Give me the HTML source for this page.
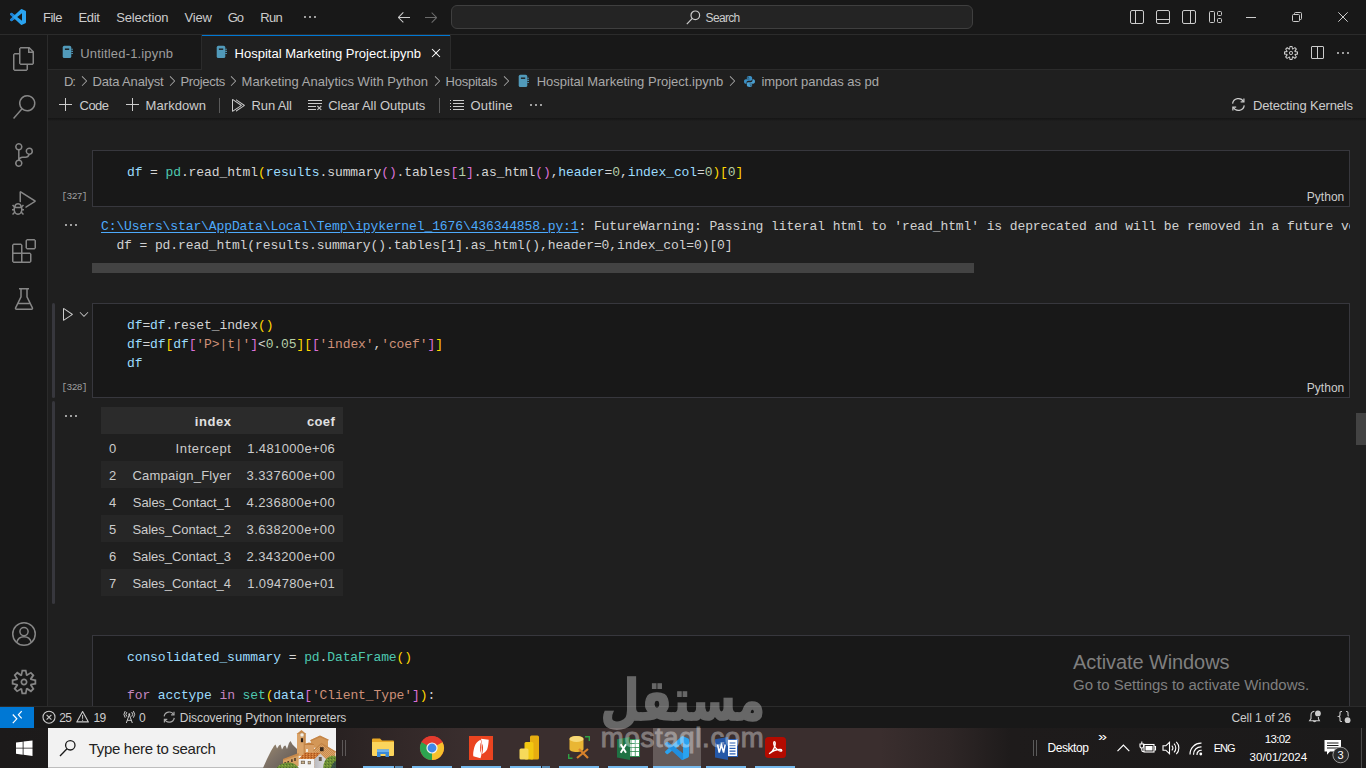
<!DOCTYPE html>
<html lang="en">
<head>
<meta charset="utf-8">
<title>Hospital Marketing Project.ipynb - Visual Studio Code</title>
<style>
html,body{margin:0;padding:0;}
body{width:1366px;height:768px;overflow:hidden;position:relative;background:#1f1f1f;font-family:"Liberation Sans",sans-serif;font-size:13px;color:#ccc;}
.abs,.t,svg.i{position:absolute;}
.t{white-space:pre;display:block;}
svg.i{overflow:visible;}
#title{left:0;top:0;width:1366px;height:34px;background:#181818;border-bottom:1px solid #2b2b2b;}
#act{left:0;top:35px;width:47px;height:671px;background:#181818;border-right:1px solid #2b2b2b;}
#tabs{left:48px;top:35px;width:1318px;height:34px;background:#181818;border-bottom:1px solid #2b2b2b;}
#tab1{left:48px;top:35px;width:153px;height:34px;border-right:1px solid #2b2b2b;}
#tab2{left:202px;top:35px;width:248px;height:35px;background:#1f1f1f;border-right:1px solid #2b2b2b;box-shadow:inset 0 1px 0 #0078d4;}
#tbshadow{left:48px;top:118px;width:1318px;height:3px;background:linear-gradient(#151515,#191919 50%,#1e1e1e);}
.cell{background:#181818;border:1px solid #37373d;box-sizing:border-box;left:92px;width:1258px;}
.code{font-family:"Liberation Mono",monospace;font-size:13px;line-height:19px;letter-spacing:-0.1px;white-space:pre;color:#d4d4d4;}
.v{color:#9cdcfe}.m{color:#4ec9b0}.y{color:#ffd700}.p{color:#da70d6}.n{color:#b5cea8}.s{color:#ce9178}.k{color:#c586c0}.b{color:#179fff}
#status{left:0;top:706px;width:1366px;height:21px;background:#181818;border-top:1px solid #2b2b2b;}
#taskbar{left:0;top:728px;width:1366px;height:40px;background:linear-gradient(90deg,#1c1a1a 0,#1f1c1c 300px,#292222 340px,#322828 400px,#3a2e2e 470px,#3a2e2e 880px,#2e2626 950px,#1e1b1b 1010px,#1b1a1a 1366px);}
</style>
</head>
<body>
<div id="title" class="abs"></div>
<svg class="i" style="left:10px;top:9px" width="16" height="16" viewBox="0 0 24 24"><path fill="#2aa3f0" d="M23.15 2.587L18.21.21a1.494 1.494 0 0 0-1.705.29l-9.46 8.63-4.12-3.128a.999.999 0 0 0-1.276.057L.327 7.261A1 1 0 0 0 .326 8.74L3.899 12 .326 15.26a1 1 0 0 0 .001 1.479L1.65 17.94a.999.999 0 0 0 1.276.057l4.12-3.128 9.46 8.63a1.492 1.492 0 0 0 1.704.29l4.942-2.377A1.5 1.5 0 0 0 24 20.06V3.939a1.5 1.5 0 0 0-.85-1.352zm-5.146 14.861L10.826 12l7.178-5.448v10.896z"/><path fill="#1b7fd3" d="M.327 7.261L1.650 6.060a.999.999 0 0 1 1.276-.057l4.120 3.128L3.899 12 .326 8.740a1 1 0 0 1 .001-1.479zM3.899 12l3.147 2.869-4.120 3.128a.999.999 0 0 1-1.276-.057L.327 16.739a1 1 0 0 1-.001-1.479z"/></svg>
<svg class="i" style="left:302px;top:9px" width="16" height="16" viewBox="0 0 16 16"><path fill="#ccc" d="M4 8a1 1 0 1 1-2 0 1 1 0 0 1 2 0zm5 0a1 1 0 1 1-2 0 1 1 0 0 1 2 0zm5 0a1 1 0 1 1-2 0 1 1 0 0 1 2 0z"/></svg>
<svg class="i" style="left:396px;top:9px" width="16" height="16" viewBox="0 0 16 16"><path fill="#ccc" d="M7 3.093l-5 5V8.8l5 5 .707-.707-4.146-4.147H14v-1H3.56L7.708 3.8 7 3.093z"/></svg>
<svg class="i" style="left:423px;top:9px" width="16" height="16" viewBox="0 0 16 16"><path fill="#6b6b6b" d="M9 13.887l5-5V8.18l-5-5-.707.707 4.146 4.147H2v1h10.44L8.292 13.18l.707.707z"/></svg>
<div class="abs" style="left:451px;top:5px;width:520px;height:22px;background:#242424;border:1px solid #3f3f3f;border-radius:6px;"></div>
<svg class="i" style="left:686px;top:10px" width="15" height="15" viewBox="0 0 15 15" fill="none" stroke="#ccc" stroke-width="1.2"><circle cx="9.3" cy="5.3" r="4.3"/><path d="M6.3 8.4L0.8 14.2"/></svg>

<svg class="i" style="left:1129px;top:9px" width="16" height="16" viewBox="0 0 16 16" fill="none" stroke="#ccc" stroke-width="1"><rect x="1.5" y="1.5" width="13" height="13" rx="1.5"/><path d="M6.5 1.5v13"/></svg>
<svg class="i" style="left:1155px;top:9px" width="16" height="16" viewBox="0 0 16 16" fill="none" stroke="#ccc" stroke-width="1"><rect x="1.5" y="1.5" width="13" height="13" rx="1.5"/><path d="M1.5 10.5h13"/></svg>
<svg class="i" style="left:1181px;top:9px" width="16" height="16" viewBox="0 0 16 16" fill="none" stroke="#ccc" stroke-width="1"><rect x="1.5" y="1.5" width="13" height="13" rx="1.5"/><path d="M9.500 1.500v13"/></svg>
<svg class="i" style="left:1207px;top:9px" width="16" height="16" viewBox="0 0 16 16" fill="none" stroke="#ccc" stroke-width="1"><rect x="2.500" y="2.500" width="5" height="11" rx="1"/><rect x="10.500" y="2.500" width="4" height="4" rx="1"/><rect x="10.500" y="9.500" width="4" height="4" rx="1"/></svg>
<svg class="i" style="left:1246px;top:12px" width="10" height="10" viewBox="0 0 10 10" fill="none" stroke="#ccc" stroke-width="1"><path d="M0 5.500h10"/></svg>
<svg class="i" style="left:1292px;top:12px" width="10" height="10" viewBox="0 0 10 10" fill="none" stroke="#ccc" stroke-width="1"><rect x="0.500" y="2.500" width="7" height="7" rx="1"/><path d="M2.500 2.500v-1a1 1 0 0 1 1-1h5a1 1 0 0 1 1 1v5a1 1 0 0 1-1 1h-1"/></svg>
<svg class="i" style="left:1338px;top:12px" width="10" height="10" viewBox="0 0 10 10" fill="none" stroke="#ccc" stroke-width="1"><path d="M0.300 0.300l9.400 9.400M9.700 0.300l-9.400 9.400"/></svg>

<div id="act" class="abs"></div>
<svg class="i" style="left:12px;top:47px" width="24" height="24" viewBox="0 0 24 24"><path fill="#868686" d="M17.5 0h-9L7 1.500V6H2.500L1 7.500v15.070L2.500 24h12.070L16 22.570V18h4.700l1.300-1.430V4.500L17.500 0zm0 2.120l2.380 2.380H17.500V2.120zm-3 20.380h-12v-15H7v9.070L8.500 18h6v4.500zm6-6h-12v-15H16V6h4.500v10.500z"/></svg>
<svg class="i" style="left:12px;top:95px" width="24" height="24" viewBox="0 0 24 24"><path fill="#868686" d="M15.250 0a8.250 8.250 0 0 0-6.180 13.720L1 22.880l1.120 1 8.050-9.120A8.251 8.251 0 1 0 15.250.01V0zm0 15a6.750 6.750 0 1 1 0-13.500 6.750 6.750 0 0 1 0 13.500z"/></svg>
<svg class="i" style="left:12px;top:143px" width="24" height="24" viewBox="0 0 24 24"><path fill="#868686" d="M21.007 8.222A3.738 3.738 0 0 0 15.045 5.200a3.737 3.737 0 0 0 1.156 6.583 2.988 2.988 0 0 1-2.668 1.670h-2.990a4.456 4.456 0 0 0-2.989 1.165V7.400a3.737 3.737 0 1 0-1.494 0v9.117a3.776 3.776 0 1 0 1.816.099 2.990 2.990 0 0 1 2.668-1.667h2.990a4.484 4.484 0 0 0 4.223-3.039 3.736 3.736 0 0 0 3.250-3.687zM4.565 3.738a2.242 2.242 0 1 1 4.484 0 2.242 2.242 0 0 1-4.484 0zm4.484 16.441a2.242 2.242 0 1 1-4.484 0 2.242 2.242 0 0 1 4.484 0zm8.221-9.715a2.242 2.242 0 1 1 0-4.485 2.242 2.242 0 0 1 0 4.485z"/></svg>
<svg class="i" style="left:12px;top:191px" width="24" height="24" viewBox="0 0 24 24"><path fill="#868686" d="M10.940 13.500l-1.320 1.320a3.730 3.730 0 0 0-7.240 0L1.060 13.500 0 14.560l1.720 1.720-.22.220V18H0v1.500h1.500v.080c.077.489.214.966.410 1.420L0 22.940 1.060 24l1.650-1.650A4.308 4.308 0 0 0 6 24a4.310 4.310 0 0 0 3.290-1.650L10.940 24 12 22.940 10.090 21c.198-.464.336-.951.410-1.450v-.1H12V18h-1.500v-1.500l-.22-.220L12 14.560l-1.060-1.060zM6 13.500a2.250 2.250 0 0 1 2.250 2.250h-4.500A2.250 2.250 0 0 1 6 13.500zm3 6a3.330 3.330 0 0 1-3 3 3.330 3.330 0 0 1-3-3v-2.250h6v2.250zm14.760-9.900v1.260L13.500 17.370V15.600l8.500-5.370L9 2v9.460a5.070 5.070 0 0 0-1.500-.720V.630L8.640 0l15.120 9.600z"/></svg>
<svg class="i" style="left:12px;top:239px" width="24" height="24" viewBox="0 0 24 24"><path fill="#868686" d="M13.500 1.500L15 0h7.500L24 1.500V9l-1.500 1.500H15L13.500 9V1.500zm1.500 0V9h7.500V1.500H15zM0 15V6l1.500-1.500H9L10.500 6v7.500H18l1.500 1.500v7.500L18 24H1.500L0 22.500V15zm9-1.500V6H1.500v7.500H9zM9 15H1.500v7.500H9V15zm1.500 7.500H18V15h-7.500v7.500z"/></svg>
<svg class="i" style="left:12px;top:287px" width="24" height="24" viewBox="0 0 24 24" fill="none" stroke="#868686" stroke-width="1.500" stroke-linejoin="round"><path d="M7 1.750h10M9 1.750v8.200L3.600 20.800a1 1 0 0 0 .9 1.450h15a1 1 0 0 0 .9-1.450L15 9.950v-8.200M5.800 16.500h12.400"/></svg>
<svg class="i" style="left:12px;top:622px" width="24" height="24" viewBox="0 0 24 24" fill="none" stroke="#868686" stroke-width="1.500"><circle cx="12" cy="12" r="11.250"/><circle cx="12" cy="9.600" r="4.100"/><path d="M4.700 20.400c.9-3.500 3.800-5.700 7.300-5.700s6.400 2.200 7.300 5.700"/></svg>
<svg class="i" style="left:10px;top:668px" width="28" height="28" viewBox="0 0 16 16"><path fill="#868686" d="M9.100 4.400L8.600 2H7.400l-.5 2.400-.7.300-2-1.300-.9.800 1.300 2-.2.700-2.400.5v1.200l2.400.5.300.8-1.300 2 .8.800 2-1.300.8.300.4 2.300h1.200l.5-2.400.8-.3 2 1.300.8-.8-1.300-2 .3-.8 2.300-.4V7.400l-2.400-.5-.3-.8 1.300-2-.8-.8-2 1.300-.7-.2zM9.400 1l.5 2.400L12 2.100l2 2-1.400 2.100 2.400.4v2.800l-2.400.5L14 12l-2 2-2.100-1.400-.5 2.400H6.600l-.5-2.400L4 13.900l-2-2 1.400-2.100L1 9.400V6.600l2.400-.5L2.100 4l2-2 2.100 1.400.4-2.400h2.800zm.6 7c0 1.100-.9 2-2 2s-2-.9-2-2 .9-2 2-2 2 .9 2 2zM8 9c.6 0 1-.4 1-1s-.4-1-1-1-1 .4-1 1 .4 1 1 1z"/></svg>

<div id="tabs" class="abs"></div>
<div id="tab1" class="abs"></div>
<div id="tab2" class="abs"></div>
<svg class="i" style="left:61px;top:45px" width="13" height="14" viewBox="0 0 13 14"><rect x="1.700" y="0.800" width="8.600" height="12.300" rx="1.600" fill="#519aba"/><rect x="3.900" y="3.500" width="4.300" height="1.400" fill="#181818"/><path d="M10.300 4.300h1.600M10.300 6.400h1.600M10.300 8.500h1.600" stroke="#519aba" stroke-width="1.100"/></svg>
<svg class="i" style="left:215px;top:45px" width="13" height="14" viewBox="0 0 13 14"><rect x="1.700" y="0.800" width="8.600" height="12.300" rx="1.600" fill="#519aba"/><rect x="3.900" y="3.500" width="4.300" height="1.400" fill="#1f1f1f"/><path d="M10.300 4.300h1.600M10.300 6.400h1.600M10.300 8.500h1.600" stroke="#519aba" stroke-width="1.100"/></svg>
<svg class="i" style="left:428px;top:45px" width="16" height="16" viewBox="0 0 16 16"><path fill="#fff" d="M8 8.707l3.646 3.647.708-.707L8.707 8l3.647-3.646-.707-.708L8 7.293 4.354 3.646l-.707.708L7.293 8l-3.646 3.646.707.708L8 8.707z"/></svg>
<!-- editor actions -->
<svg class="i" style="left:1283px;top:45px" width="16" height="16" viewBox="0 0 16 16"><path fill="#ccc" d="M9.100 4.400L8.600 2H7.400l-.5 2.400-.7.300-2-1.300-.9.800 1.300 2-.2.700-2.400.5v1.200l2.400.5.300.8-1.300 2 .8.800 2-1.300.8.300.4 2.300h1.200l.5-2.400.8-.3 2 1.300.8-.8-1.300-2 .3-.8 2.300-.4V7.400l-2.400-.5-.3-.8 1.300-2-.8-.8-2 1.300-.7-.2zM9.400 1l.5 2.400L12 2.100l2 2-1.400 2.100 2.400.4v2.800l-2.400.5L14 12l-2 2-2.100-1.400-.5 2.400H6.600l-.5-2.400L4 13.900l-2-2 1.400-2.100L1 9.400V6.600l2.400-.5L2.100 4l2-2 2.100 1.400.4-2.400h2.800zm.6 7c0 1.100-.9 2-2 2s-2-.9-2-2 .9-2 2-2 2 .9 2 2zM8 9c.6 0 1-.4 1-1s-.4-1-1-1-1 .4-1 1 .4 1 1 1z"/></svg>
<svg class="i" style="left:1309px;top:45px" width="16" height="16" viewBox="0 0 16 16"><path fill="#ccc" d="M14 1H3L2 2v11l1 1h11l1-1V2l-1-1zM8 13H3V2h5v11zm6 0H9V2h5v11z"/></svg>
<svg class="i" style="left:1335px;top:45px" width="16" height="16" viewBox="0 0 16 16"><path fill="#ccc" d="M4 8a1 1 0 1 1-2 0 1 1 0 0 1 2 0zm5 0a1 1 0 1 1-2 0 1 1 0 0 1 2 0zm5 0a1 1 0 1 1-2 0 1 1 0 0 1 2 0z"/></svg>
<!-- breadcrumb chevrons -->
<svg class="i" style="left:76px;top:73px" width="16" height="16" viewBox="0 0 16 16"><path fill="#a9a9a9" d="M10.072 8.024L5.715 3.667l.618-.62L11 7.716v.618L6.333 13l-.618-.619 4.357-4.357z"/></svg>
<svg class="i" style="left:164px;top:73px" width="16" height="16" viewBox="0 0 16 16"><path fill="#a9a9a9" d="M10.072 8.024L5.715 3.667l.618-.62L11 7.716v.618L6.333 13l-.618-.619 4.357-4.357z"/></svg>
<svg class="i" style="left:225px;top:73px" width="16" height="16" viewBox="0 0 16 16"><path fill="#a9a9a9" d="M10.072 8.024L5.715 3.667l.618-.62L11 7.716v.618L6.333 13l-.618-.619 4.357-4.357z"/></svg>
<svg class="i" style="left:429px;top:73px" width="16" height="16" viewBox="0 0 16 16"><path fill="#a9a9a9" d="M10.072 8.024L5.715 3.667l.618-.62L11 7.716v.618L6.333 13l-.618-.619 4.357-4.357z"/></svg>
<svg class="i" style="left:498px;top:73px" width="16" height="16" viewBox="0 0 16 16"><path fill="#a9a9a9" d="M10.072 8.024L5.715 3.667l.618-.62L11 7.716v.618L6.333 13l-.618-.619 4.357-4.357z"/></svg>
<svg class="i" style="left:724px;top:73px" width="16" height="16" viewBox="0 0 16 16"><path fill="#a9a9a9" d="M10.072 8.024L5.715 3.667l.618-.62L11 7.716v.618L6.333 13l-.618-.619 4.357-4.357z"/></svg>
<svg class="i" style="left:517px;top:74px" width="13" height="14" viewBox="0 0 13 14"><rect x="1.700" y="0.800" width="8.600" height="12.300" rx="1.600" fill="#519aba"/><rect x="3.900" y="3.500" width="4.300" height="1.400" fill="#1f1f1f"/><path d="M10.300 4.300h1.600M10.300 6.400h1.600M10.300 8.500h1.600" stroke="#519aba" stroke-width="1.100"/></svg>
<svg class="i" style="left:744px;top:75.500px" width="11" height="11" viewBox="0 0 12 12"><path fill="#3a8fc4" d="M5.900 0C3.800 0 3.100.8 3.100 1.800v1.300H6v.5H1.900C.8 3.600 0 4.500 0 6s.7 2.500 1.800 2.500h1V7c0-1 .9-1.900 1.900-1.900h2.700c.8 0 1.500-.7 1.500-1.500V1.800C8.900.7 7.700 0 5.900 0zM4.400 1a.5.500 0 1 1 0 1.100.5.500 0 0 1 0-1.100z"/><path fill="#4b9fd0" d="M6.100 12c2.100 0 2.800-.8 2.800-1.800V8.900H6v-.5h4.100c1.100 0 1.900-.9 1.900-2.400s-.7-2.500-1.800-2.500h-1V5c0 1-.9 1.900-1.900 1.900H4.600c-.8 0-1.500.7-1.500 1.500v1.800c0 1.100 1.200 1.800 3 1.800zm1.500-1a.5.500 0 1 1 0-1.100.5.500 0 0 1 0 1.100z"/></svg>
<!-- toolbar icons -->
<svg class="i" style="left:58px;top:97px" width="16" height="16" viewBox="0 0 16 16"><path fill="#ccc" d="M14 7v1H8v6H7V8H1V7h6V1h1v6h6z"/></svg>
<svg class="i" style="left:124.500px;top:97px" width="16" height="16" viewBox="0 0 16 16"><path fill="#ccc" d="M14 7v1H8v6H7V8H1V7h6V1h1v6h6z"/></svg>
<div class="abs" style="left:219px;top:98px;width:1px;height:15px;background:#5a5a5a"></div>
<svg class="i" style="left:230px;top:97px" width="16" height="16" viewBox="0 0 16 16"><path fill="#ccc" d="M2.780 2L2 2.410v12l.78.420 9-6V8l-9-6zM3 13.480V3.350l7.600 5.070L3 13.480z"/><path fill="#ccc" d="M6 14.683l8.780-5.853V8L6 2.147V3.350l7.600 5.070L6 13.480v1.203z"/></svg>
<svg class="i" style="left:307.300px;top:97px" width="16" height="16" viewBox="0 0 16 16"><path fill="#ccc" d="M10 12.600l.7.700 1.600-1.600 1.600 1.600.8-.7L13 11l1.700-1.600-.8-.8-1.600 1.700-1.600-1.700-.7.800 1.600 1.600-1.600 1.600zM1 4h14V3H1v1zm0 3h14V6H1v1zm8 2.500V9H1v1h8v-.5zM9 13v-1H1v1h8z"/></svg>
<div class="abs" style="left:439px;top:98px;width:1px;height:15px;background:#5a5a5a"></div>
<svg class="i" style="left:449px;top:97px" width="16" height="16" viewBox="0 0 16 16"><path fill="#ccc" d="M2 3H1v1h1V3zm0 3H1v1h1V6zM1 9h1v1H1V9zm1 3H1v1h1v-1zm2-9h11v1H4V3zm11 3H4v1h11V6zM4 9h11v1H4V9zm11 3H4v1h11v-1z"/></svg>
<svg class="i" style="left:527.500px;top:97px" width="16" height="16" viewBox="0 0 16 16"><path fill="#ccc" d="M4 8a1 1 0 1 1-2 0 1 1 0 0 1 2 0zm5 0a1 1 0 1 1-2 0 1 1 0 0 1 2 0zm5 0a1 1 0 1 1-2 0 1 1 0 0 1 2 0z"/></svg>
<svg class="i" style="left:1231px;top:97px" width="15" height="15" viewBox="0 0 15 15" fill="none" stroke="#ccc" stroke-width="1.250"><path d="M1.56 6.68A5.9 5.9 0 0 1 12.61 4.73M13.24 8.32A5.9 5.9 0 0 1 2.19 10.27"/><path d="M12.91 1.43v3.50h-3.30M1.89 13.57v-3.50h3.30"/></svg>
<div id="tbshadow" class="abs"></div>

<!-- cell 1 -->
<div class="abs cell" style="top:150px;height:57px"></div>
<div class="abs code" style="left:127px;top:163px"><span class="v">df</span> = <span class="m">pd</span>.read_html<span class="y">(</span><span class="v">results</span>.summary<span class="p">()</span>.tables<span class="p">[</span><span class="n">1</span><span class="p">]</span>.as_html<span class="p">()</span>,<span class="v">header</span>=<span class="n">0</span>,<span class="v">index_col</span>=<span class="n">0</span><span class="y">)[</span><span class="n">0</span><span class="y">]</span></div>
<div class="abs" style="left:101px;top:211px;width:1249px;height:50px;overflow:hidden"><div class="abs code" style="left:0;top:6px;color:#d2d2d2"><span style="color:#4daafc;text-decoration:underline;text-underline-offset:2px">C:\Users\star\AppData\Local\Temp\ipykernel_1676\436344858.py:1</span>: FutureWarning: Passing literal html to 'read_html' is deprecated and will be removed in a future version. To read from a literal string, wrap it in a 'StringIO' object.
  df = pd.read_html(results.summary().tables[1].as_html(),header=0,index_col=0)[0]</div></div>
<div class="abs" style="left:92px;top:263px;width:882px;height:10px;background:#434343"></div>
<svg class="i" style="left:63px;top:217px" width="16" height="16" viewBox="0 0 16 16"><path fill="#ccc" d="M4 8a1 1 0 1 1-2 0 1 1 0 0 1 2 0zm5 0a1 1 0 1 1-2 0 1 1 0 0 1 2 0zm5 0a1 1 0 1 1-2 0 1 1 0 0 1 2 0z"/></svg>
<!-- cell 2 -->
<div class="abs" style="left:52px;top:303px;width:3px;height:95px;background:#37373d;border-radius:1.500px"></div>
<div class="abs" style="left:52px;top:401px;width:3px;height:203px;background:#37373d;border-radius:1.500px"></div>
<div class="abs cell" style="top:303px;height:95px"></div>
<svg class="i" style="left:60px;top:306px" width="16" height="16" viewBox="0 0 16 16"><path fill="#ccc" d="M3.780 2L3 2.410v12l.78.420 9-6V8l-9-6zM4 13.480V3.350l7.600 5.070L4 13.480z"/></svg>
<svg class="i" style="left:77px;top:307px" width="14" height="14" viewBox="0 0 16 16"><path fill="#ccc" d="M7.976 10.072l4.357-4.357.62.618L8.284 11h-.618L3 6.333l.619-.618 4.357 4.357z"/></svg>
<div class="abs code" style="left:127px;top:316px"><span class="v">df</span>=<span class="v">df</span>.reset_index<span class="y">()</span>
<span class="v">df</span>=<span class="v">df</span><span class="y">[</span><span class="v">df</span><span class="p">[</span><span class="s">'P&gt;|t|'</span><span class="p">]</span>&lt;<span class="n">0.05</span><span class="y">][</span><span class="p">[</span><span class="s">'index'</span>,<span class="s">'coef'</span><span class="p">]</span><span class="y">]</span>
<span class="v">df</span></div>
<svg class="i" style="left:63px;top:408px" width="16" height="16" viewBox="0 0 16 16"><path fill="#ccc" d="M4 8a1 1 0 1 1-2 0 1 1 0 0 1 2 0zm5 0a1 1 0 1 1-2 0 1 1 0 0 1 2 0zm5 0a1 1 0 1 1-2 0 1 1 0 0 1 2 0z"/></svg>
<!-- dataframe -->
<div class="abs" style="left:101px;top:407px;width:242px;height:27px;background:#2b2b2b"></div>
<div class="abs" style="left:101px;top:461px;width:242px;height:27px;background:#262626"></div>
<div class="abs" style="left:101px;top:515px;width:242px;height:27px;background:#262626"></div>
<div class="abs" style="left:101px;top:569px;width:242px;height:27px;background:#262626"></div>
<!-- cell 3 -->
<div class="abs cell" style="top:635px;height:80px"></div>
<div class="abs code" style="left:127px;top:647.500px"><span class="v">consolidated_summary</span> = <span class="m">pd</span>.<span class="m">DataFrame</span><span class="y">()</span>

<span class="k">for</span> <span class="v">acctype</span> <span class="k">in</span> <span class="m">set</span><span class="y">(</span><span class="v">data</span><span class="p">[</span><span class="s">'Client_Type'</span><span class="p">]</span><span class="y">)</span>:</div>
<!-- vertical scrollbar -->
<div class="abs" style="left:1356px;top:413px;width:10px;height:32px;background:#434343"></div>

<div id="status" class="abs"></div>
<div class="abs" style="left:0;top:707px;width:34px;height:21px;background:#0078d4"></div>
<svg class="i" style="left:9px;top:709px" width="16" height="16" viewBox="0 0 16 16" fill="none" stroke="#fff" stroke-width="1.200"><path d="M3.800 5.500l4 4.300-4 4.300M12.700 2.200l-3.300 3.600 3.300 3.600"/></svg>
<svg class="i" style="left:42px;top:710px" width="14" height="14" viewBox="0 0 14 14" fill="none" stroke="#ccc" stroke-width="1.100"><circle cx="7" cy="7.200" r="6"/><path d="M4.600 4.800l4.800 4.800M9.400 4.800l-4.800 4.800"/></svg>
<svg class="i" style="left:76px;top:710px" width="14" height="14" viewBox="0 0 14 14" fill="none" stroke="#ccc" stroke-width="1.100" stroke-linejoin="round"><path d="M6.600 1.600L0.800 11.900h11.600z"/><path d="M6.600 5v3.800M6.600 9.700v1.100" stroke-width="1"/></svg>
<svg class="i" style="left:122px;top:710px" width="15" height="14" viewBox="0 0 15 14" fill="none" stroke="#ccc" stroke-width="1"><path d="M7.300 4.600L4.300 13M7.300 4.600l3 8.400M5.300 10.300h4"/><circle cx="7.300" cy="4.300" r="1" fill="#ccc" stroke="none"/><path d="M4.900 2.100a3.300 3.300 0 0 0 0 4.500M9.700 2.100a3.300 3.300 0 0 1 0 4.500M3.200 1.100a5.400 5.400 0 0 0 0 6.600M11.400 1.100a5.400 5.400 0 0 1 0 6.600"/></svg>
<svg class="i" style="left:162px;top:710px" width="14" height="14" viewBox="0 0 14 14" fill="none" stroke="#a6a6a6" stroke-width="1.200"><path d="M2.15 6.39A5.1 5.1 0 0 1 11.70 4.71M12.25 7.81A5.1 5.1 0 0 1 2.70 9.49"/><path d="M12.00 1.81v3.10h-2.90M2.40 12.39v-3.10h2.90"/></svg>
<svg class="i" style="left:1308px;top:710px" width="14" height="14" viewBox="0 0 14 14" fill="none" stroke="#ccc" stroke-width="1.100"><path d="M6.400 1.200A4 4 0 0 0 3 5.200v3.300L1.600 10.700h9.800L10.400 8.700V7"/><path d="M5.200 10.800a1.600 1.600 0 0 0 2.800 0"/><circle cx="9.900" cy="3.400" r="2.900" fill="#ccc" stroke="none"/></svg>
<svg class="i" style="left:1338px;top:710px" width="14" height="14" viewBox="0 0 14 14" fill="none" stroke="#ccc" stroke-width="1.100"><path d="M4 1.500H3.300a1.300 1.300 0 0 0-1.300 1.300v2.200c0 .8-.5 1.300-1.200 1.500.7.200 1.200.7 1.200 1.500v2.200a1.300 1.300 0 0 0 1.300 1.300H4"/><path d="M8 1.500h.7a1.300 1.300 0 0 1 1.300 1.300v2.200c0 .5.200.9.600 1.200"/><circle cx="9.600" cy="10.200" r="2.900" fill="#ccc" stroke="none"/></svg>

<div id="taskbar" class="abs"></div>
<!-- start -->
<svg class="i" style="left:15.800px;top:739.800px" width="16.500" height="16.400" viewBox="0 0 18 17"><path fill="#fff" d="M0 2.400L7.300 1.400v6.700H0zM8.200 1.300L18 0v8.100H8.200zM0 8.900h7.300v6.700L0 14.600zM8.200 8.900H18V17l-9.800-1.300z"/></svg>
<!-- search box -->
<div class="abs" style="left:48px;top:728px;width:288px;height:40px;background:#f2f2f2;overflow:hidden;box-shadow:inset 0 -1px 0 #bdbdbd">
<svg class="abs" style="left:204px;top:0" width="84" height="40" viewBox="252 728 84 40">
<defs><pattern id="hx" width="2" height="2" patternUnits="userSpaceOnUse"><rect width="2" height="2" fill="#dca56a"/><rect width="1" height="1" fill="#c88b4e"/><rect x="1" y="1" width="1" height="1" fill="#c88b4e"/></pattern>
<pattern id="rf" width="3" height="2" patternUnits="userSpaceOnUse"><rect width="3" height="2" fill="#c9712f"/><rect width="1" height="1" fill="#e0934f"/><rect x="2" y="1" width="1" height="1" fill="#a9551f"/></pattern>
<pattern id="gr" width="3" height="3" patternUnits="userSpaceOnUse"><rect width="3" height="3" fill="#6d8f35"/><rect width="1" height="1" fill="#8fae45"/><rect x="1" y="2" width="1" height="1" fill="#4c6b2c"/></pattern>
<linearGradient id="mt" x1="0" y1="0" x2="1" y2="1"><stop offset="0" stop-color="#a08b6b"/><stop offset=".45" stop-color="#7d7166"/><stop offset="1" stop-color="#5b5450"/></linearGradient>
<linearGradient id="gh" x1="0" y1="0" x2="1" y2="0"><stop offset="0" stop-color="#b9b9bd"/><stop offset="1" stop-color="#dcdcde"/></linearGradient></defs>
<path fill="url(#mt)" d="M263 768l4-9 4-8 3-5 1.500-1.500 1.500 4 2-3 1.500-1 1.500 5 2-3.500 1.500-.5 1.500 3.500 2-6 1.500-2 2 3.500 3 3 2 2v21z"/>
<path fill="#dba469" d="M297 733.500h8.600V756H297z"/><path fill="#c98b4c" d="M296.500 734l5-4 4.800 4z"/><rect x="303.600" y="733.500" width="2" height="20.500" fill="#c58a4e"/>
<circle cx="302" cy="734.900" r="2" fill="#f4efe6" stroke="#b9986a" stroke-width=".5"/><rect x="300.900" y="738.200" width="2.200" height="4" fill="#2a2019"/>
<path fill="#d39757" d="M310.800 740l9.200-4.200 8 4v8h-17.200z"/><path fill="#c48547" d="M310 740.300l10-4.800 9 4.300-1 1-8-3.500-9 4z"/>
<path fill="#d9a066" d="M305 743.600h9v10h-9z"/><path fill="#c3803f" d="M304.500 744l4.500-1.500 5 1.500v1h-9.500z"/><rect x="306" y="749" width="2" height="3" fill="#f1ebdd"/>
<path fill="url(#hx)" d="M313.700 750l7.700-6.800 14 8.300V768h-21.700z"/><path fill="#c58748" d="M313 750.300l8.400-7.600 14.600 8.800v1.300l-14.600-8.300-7.600 6.800z"/>
<rect x="320" y="747.200" width="3.600" height="4" fill="#3a2a1d"/>
<path fill="#d7a162" d="M283 759.500l15.700-5.500v12l-15.700 2z"/><path fill="#c98a4b" d="M283 759l15.700-6v2.200L283 760.500z"/>
<path fill="#3d2e22" d="M284.500 762h1.400v2.500h-1.400zM287.500 761h1.400v2.500h-1.400zM291.200 759.300h1.400v2.800h-1.400zM294.300 758h1.400v3h-1.400z"/>
<path fill="url(#rf)" d="M298.300 759.200l6.500-6.400h15.700l-6 6.400z"/>
<path fill="#f3f3f3" d="M298.900 759h15.500v9h-15.500z"/><path fill="url(#gh)" d="M314.400 759l5.900-5.300 5.800 5.600V768h-11.700z"/>
<path fill="#6a5a49" d="M300.900 760.800h4v3.200h-4zM307.800 761h3v3.300h-3zM318.800 757.100h2.900v4h-2.900z"/><path fill="#c9b38f" d="M301.500 761.400h2.800v2h-2.800zM308.300 761.600h2v2h-2z"/>
<path fill="url(#gr)" d="M323.200 768c0-5 2-9 5.500-11s7.300-1 7.300 0v11zM276.400 768c2-3 6-5 11-5.500s9 1.500 11 5.500z"/>
<path fill="#23364a" d="M333 763l3-2v7h-5z" opacity=".7"/>
</svg>
</div>
<svg class="i" style="left:59px;top:739px" width="18" height="18" viewBox="0 0 18 18" fill="none" stroke="#1a1a1a" stroke-width="1.300"><circle cx="11.300" cy="6.300" r="4.700"/><path d="M8 9.700L1 17"/></svg>
<div class="abs" style="left:342px;top:740px;width:1px;height:16px;background:#5c5757"></div>
<div class="abs" style="left:345px;top:740px;width:1px;height:16px;background:#5c5757"></div>
<!-- running indicators -->
<div class="abs" style="left:363px;top:766px;width:40px;height:2px;background:linear-gradient(90deg,#76b9ed 0,#76b9ed 31px,#2c2324 31px,#2c2324 32px,#5a8db6 32px)"></div>
<div class="abs" style="left:412px;top:766px;width:40px;height:2px;background:#76b9ed"></div>
<div class="abs" style="left:461px;top:766px;width:40px;height:2px;background:#76b9ed"></div>
<div class="abs" style="left:510px;top:766px;width:40px;height:2px;background:linear-gradient(90deg,#76b9ed 0,#76b9ed 31px,#2c2324 31px,#2c2324 32px,#5a8db6 32px)"></div>
<div class="abs" style="left:559px;top:766px;width:40px;height:2px;background:#76b9ed"></div>
<div class="abs" style="left:608px;top:766px;width:40px;height:2px;background:#76b9ed"></div>
<div class="abs" style="left:653px;top:728px;width:48px;height:40px;background:#655b5a"></div>
<div class="abs" style="left:653px;top:766px;width:48px;height:2px;background:#76b9ed"></div>
<div class="abs" style="left:706px;top:766px;width:40px;height:2px;background:#76b9ed"></div>
<div class="abs" style="left:755px;top:766px;width:40px;height:2px;background:#76b9ed"></div>
<!-- file explorer -->
<svg class="i" style="left:371px;top:737px" width="24" height="21" viewBox="0 0 24 21"><path fill="#e9a825" d="M1 2.500a1 1 0 0 1 1-1h7l2 2h11a1 1 0 0 1 1 1V6H1z"/><path fill="#fbd45c" d="M1 5h22v13a1 1 0 0 1-1 1H2a1 1 0 0 1-1-1z"/><path fill="#3b8ad8" d="M6 12.500h12v7.500h-3.500v-3h-5v3H6z"/><path fill="#6cb2ee" d="M6 12.500h12v2.500H6z"/></svg>
<!-- chrome -->
<svg class="i" style="left:420px;top:736px" width="24" height="24" viewBox="0 0 24 24"><circle cx="12" cy="12" r="12" fill="#e33b2e"/><path fill="#f6c12d" d="M12 12l10.400-6A12 12 0 0 1 12 24z"/><path fill="#2da44f" d="M12 12v12A12 12 0 0 1 1.600 6z"/><path fill="#e33b2e" d="M12 12L1.600 6A12 12 0 0 1 22.400 6z"/><circle cx="12" cy="12" r="5.600" fill="#f1f1f1"/><circle cx="12" cy="12" r="4.400" fill="#3f87e8"/></svg>
<!-- red app -->
<svg class="i" style="left:469px;top:736px" width="24" height="24" viewBox="0 0 24 24"><rect width="24" height="24" fill="#ea4420"/><path fill="#fff" d="M6.400 8.400C8 6 9.800 4.600 11.500 3.800c1 2.400 1.500 5 1.500 7.700 0 3.800-.5 7.500-1.500 10.700L4.300 20.200c-.3-2.200 0-4.500.5-6.700.3-1.800.8-3.500 1.600-5.100z"/><path fill="#fff" d="M12 2.800l7.700 1c-.1 3.400-.6 6.700-1.600 9.700-1.300 2-3 3.500-5.100 4.600.8-2.100 1-4.300 1-6.600 0-1.400-.3-2.800-1-4.100z"/><path fill="#ea4420" d="M11.800 6.500c.9 2.500.9 6.500-.3 10.500-.5-3-.6-7.500.3-10.500z"/></svg>
<!-- power bi -->
<svg class="i" style="left:519px;top:735px" width="21" height="25" viewBox="0 0 21 25"><rect x="11" y="0.500" width="9" height="24" rx="1.500" fill="#e6ad10"/><rect x="5.500" y="7" width="9" height="17.500" rx="1.500" fill="#f2c811"/><rect x="0.500" y="13.500" width="9" height="11" rx="1.500" fill="#f7da5a"/></svg>
<!-- db tools -->
<svg class="i" style="left:567px;top:735px" width="25" height="25" viewBox="0 0 25 25"><path fill="#e9b634" d="M2.500 4c0-1.700 3-3 7-3s7 1.300 7 3v10c0 1.700-3 3-7 3s-7-1.300-7-3z"/><ellipse cx="9.500" cy="4" rx="7" ry="3" fill="#f7d978"/><path fill="none" stroke="#2ea043" stroke-width="1.400" d="M18 1.700h4.300V6M5.500 23.300H1.700V19"/><path fill="none" stroke="#d9822b" stroke-width="2.200" d="M10 23l11-9M12 14l9 9"/></svg>
<!-- excel -->
<svg class="i" style="left:617px;top:737px" width="23" height="23" viewBox="0 0 23 23"><rect x="9" y="2.500" width="13.500" height="17" fill="#fff" stroke="#2f8a4f" stroke-width="1"/><path stroke="#2f8a4f" stroke-width=".8" d="M9 6.500h13.500M9 10.500h13.500M9 14.500h13.500M14 2.500v17M18.300 2.500v17"/><path fill="#1f7244" d="M0 2.300L13 0v23L0 20.500z"/><path fill="none" stroke="#fff" stroke-width="1.900" d="M3.700 7.300l5.300 8.500M9 7.300l-5.300 8.500"/></svg>
<!-- vscode -->
<svg class="i" style="left:665px;top:736px" width="24" height="24" viewBox="0 0 24 24"><path fill="#2aa3f0" d="M23.150 2.587L18.210.210a1.494 1.494 0 0 0-1.705.290l-9.460 8.630-4.120-3.128a.999.999 0 0 0-1.276.057L.327 7.261A1 1 0 0 0 .326 8.740L3.899 12 .326 15.260a1 1 0 0 0 .001 1.479L1.650 17.940a.999.999 0 0 0 1.276.057l4.120-3.128 9.460 8.630a1.492 1.492 0 0 0 1.704.290l4.942-2.377A1.500 1.500 0 0 0 24 20.060V3.939a1.500 1.500 0 0 0-.850-1.352zm-5.146 14.861L10.826 12l7.178-5.448v10.896z"/><path fill="#1a7fd1" d="M.327 7.261L1.650 6.060a.999.999 0 0 1 1.276-.057l15.078 11.445v5.900a1.490 1.490 0 0 1-1.498.362L.326 8.740a1 1 0 0 1 .001-1.479z" opacity=".55"/></svg>
<!-- word -->
<svg class="i" style="left:715px;top:737px" width="23" height="23" viewBox="0 0 23 23"><rect x="9" y="2.500" width="13.500" height="17" fill="#fff" stroke="#2b5fb4" stroke-width="1"/><path stroke="#2b5fb4" stroke-width="1.200" d="M14.500 6h6M14.500 8.700h6M14.500 11.400h6M14.500 14.100h6M14.500 16.800h6"/><path fill="#2558a8" d="M0 2.300L13 0v23L0 20.500z"/><path fill="none" stroke="#fff" stroke-width="1.500" d="M2.600 7.500l1.600 8 2.200-7.500 2.200 7.500 1.600-8"/></svg>
<!-- acrobat -->
<svg class="i" style="left:764.700px;top:737.300px" width="21" height="21" viewBox="0 0 21 21"><rect width="21" height="21" rx="3.500" fill="#b30b00"/><path fill="none" stroke="#fff" stroke-width="1.300" stroke-linejoin="round" d="M4.500 16.500c1.500-.5 4.500-4 5.500-8 .5-2 .3-3.800-.6-3.800s-1 2 0 4.300c1.200 2.700 4.300 5.200 6.300 5.200 1.500 0 1.500-1.700-.5-1.700-3 0-8 1.500-10.700 4z"/></svg>
<!-- tray -->
<div class="abs" style="left:1033px;top:740px;width:1px;height:16px;background:#5a5a5a"></div>
<div class="abs" style="left:1036px;top:740px;width:1px;height:16px;background:#5a5a5a"></div>
<svg class="i" style="left:1117px;top:744px" width="13" height="8" viewBox="0 0 13 8" fill="none" stroke="#fff" stroke-width="1.200"><path d="M0.500 7.200L6.400 1.200l5.900 6"/></svg>
<svg class="i" style="left:1139px;top:741px" width="17" height="13" viewBox="0 0 17 13" fill="none" stroke="#fff" stroke-width="1.100"><rect x="5" y="3.500" width="10" height="7.500"/><path d="M15.500 5.500h1v3.500h-1"/><rect x="6.500" y="5" width="7" height="4.500" fill="#fff" stroke="none"/><path d="M2.800 0.500v2.500M1 3h3.600v2.300a1.800 1.800 0 0 1-3.600 0zM2.800 7.100v2c0 1.500 1.200 1.500 2.200 1.200"/></svg>
<svg class="i" style="left:1162px;top:741px" width="18" height="14" viewBox="0 0 18 14" fill="none" stroke="#fff" stroke-width="1.100"><path d="M1 4.800h2.800L7.500 1.300v11.400L3.800 9.200H1z"/><path d="M9.800 4.600a3.500 3.500 0 0 1 0 4.800M12 2.600a6.200 6.200 0 0 1 0 8.800M14.300 0.800a8.800 8.800 0 0 1 0 12.400"/></svg>
<svg class="i" style="left:1189px;top:742px" width="14" height="14" viewBox="0 0 14 14" fill="none" stroke="#fff" stroke-width="1.200"><path d="M1 12.500A11 11 0 0 1 12.500 1.200M4.500 12.800a7.500 7.500 0 0 1 8-8M8 13a4.200 4.200 0 0 1 4.700-4.700"/><circle cx="11.800" cy="12" r="1.400" fill="#fff" stroke="none"/></svg>
<svg class="i" style="left:1324px;top:740px" width="18" height="15" viewBox="0 0 18 15"><path fill="#fff" d="M0.500 0h16.500v11.500H6l-3 3.200v-3.200H0.500z"/><path stroke="#1c1c1c" stroke-width="1" d="M3 3h11.500M3 5.500h11.500M3 8h11.500"/></svg>

<svg class="i" style="left:1332px;top:746px" width="18" height="18" viewBox="0 0 18 18"><circle cx="8.700" cy="9" r="7.800" fill="#2a2a2a" stroke="#9a9a9a" stroke-width="1"/></svg>
<div class="abs" style="left:1361px;top:728px;width:1px;height:40px;background:#4a4a4a"></div>

<span class="t" style="left:43.0px;top:11.0px;font-size:13px;line-height:13px;color:#ccc;letter-spacing:-0.48px;">File</span>
<span class="t" style="left:78.4px;top:11.0px;font-size:13px;line-height:13px;color:#ccc;letter-spacing:-0.27px;">Edit</span>
<span class="t" style="left:116.2px;top:11.0px;font-size:13px;line-height:13px;color:#ccc;letter-spacing:-0.15px;">Selection</span>
<span class="t" style="left:184.4px;top:11.0px;font-size:13px;line-height:13px;color:#ccc;letter-spacing:-0.12px;">View</span>
<span class="t" style="left:227.7px;top:11.0px;font-size:13px;line-height:13px;color:#ccc;letter-spacing:-1.04px;">Go</span>
<span class="t" style="left:260.3px;top:11.0px;font-size:13px;line-height:13px;color:#ccc;letter-spacing:-0.73px;">Run</span>
<span class="t" style="left:705.6px;top:11.8px;font-size:12px;line-height:12px;color:#ccc;letter-spacing:-0.69px;">Search</span>
<span class="t" style="left:80.3px;top:46.5px;font-size:13px;line-height:13px;color:#9d9d9d;letter-spacing:0.16px;">Untitled-1.ipynb</span>
<span class="t" style="left:234.6px;top:46.5px;font-size:13px;line-height:13px;color:#fff;">Hospital Marketing Project.ipynb</span>
<span class="t" style="left:64.1px;top:75.0px;font-size:13px;line-height:13px;color:#a9a9a9;letter-spacing:-1.30px;">D:</span>
<span class="t" style="left:92.5px;top:75.0px;font-size:13px;line-height:13px;color:#a9a9a9;letter-spacing:-0.16px;">Data Analyst</span>
<span class="t" style="left:180.4px;top:75.0px;font-size:13px;line-height:13px;color:#a9a9a9;letter-spacing:-0.31px;">Projects</span>
<span class="t" style="left:241.6px;top:75.0px;font-size:13px;line-height:13px;color:#a9a9a9;letter-spacing:0.02px;">Marketing Analytics With Python</span>
<span class="t" style="left:445.5px;top:75.0px;font-size:13px;line-height:13px;color:#a9a9a9;letter-spacing:-0.23px;">Hospitals</span>
<span class="t" style="left:536.7px;top:75.0px;font-size:13px;line-height:13px;color:#a9a9a9;">Hospital Marketing Project.ipynb</span>
<span class="t" style="left:761.4px;top:75.0px;font-size:13px;line-height:13px;color:#a9a9a9;letter-spacing:-0.01px;">import pandas as pd</span>
<span class="t" style="left:79.6px;top:98.5px;font-size:13px;line-height:13px;color:#ccc;letter-spacing:-0.56px;">Code</span>
<span class="t" style="left:145.5px;top:98.5px;font-size:13px;line-height:13px;color:#ccc;letter-spacing:0.08px;">Markdown</span>
<span class="t" style="left:251.5px;top:98.5px;font-size:13px;line-height:13px;color:#ccc;letter-spacing:-0.12px;">Run All</span>
<span class="t" style="left:328.2px;top:98.5px;font-size:13px;line-height:13px;color:#ccc;letter-spacing:-0.03px;">Clear All Outputs</span>
<span class="t" style="left:470.6px;top:98.5px;font-size:13px;line-height:13px;color:#ccc;letter-spacing:0.13px;">Outline</span>
<span class="t" style="left:1252.9px;top:98.5px;font-size:13px;line-height:13px;color:#ccc;letter-spacing:-0.15px;">Detecting Kernels</span>
<span class="t" style="left:61.5px;top:191.7px;font-size:9.5px;line-height:9.5px;color:#a0a0a0;font-family:'Liberation Mono', monospace;letter-spacing:-0.63px;">[327]</span>
<span class="t" style="left:61.5px;top:382.7px;font-size:9.5px;line-height:9.5px;color:#a0a0a0;font-family:'Liberation Mono', monospace;letter-spacing:-0.63px;">[328]</span>
<span class="t" style="left:1306.7px;top:190.8px;font-size:12px;line-height:12px;color:#ccc;letter-spacing:0.05px;">Python</span>
<span class="t" style="left:1306.7px;top:381.8px;font-size:12px;line-height:12px;color:#ccc;letter-spacing:0.05px;">Python</span>
<span class="t" style="left:194.8px;top:414.8px;font-size:13px;line-height:13px;color:#e0e0e0;font-weight:700;letter-spacing:0.56px;">index</span>
<span class="t" style="left:306.9px;top:414.8px;font-size:13px;line-height:13px;color:#e0e0e0;font-weight:700;letter-spacing:0.39px;">coef</span>
<span class="t" style="left:109.0px;top:441.8px;font-size:13px;line-height:13px;color:#ccc;">0</span>
<span class="t" style="left:175.6px;top:441.8px;font-size:13px;line-height:13px;color:#ccc;letter-spacing:0.60px;">Intercept</span>
<span class="t" style="left:247.3px;top:441.8px;font-size:13px;line-height:13px;color:#ccc;letter-spacing:0.36px;">1.481000e+06</span>
<span class="t" style="left:109.0px;top:468.8px;font-size:13px;line-height:13px;color:#ccc;">2</span>
<span class="t" style="left:132.4px;top:468.8px;font-size:13px;line-height:13px;color:#ccc;letter-spacing:0.25px;">Campaign_Flyer</span>
<span class="t" style="left:246.5px;top:468.8px;font-size:13px;line-height:13px;color:#ccc;letter-spacing:0.43px;">3.337600e+00</span>
<span class="t" style="left:109.0px;top:495.8px;font-size:13px;line-height:13px;color:#ccc;">4</span>
<span class="t" style="left:132.8px;top:495.8px;font-size:13px;line-height:13px;color:#ccc;letter-spacing:-0.06px;">Sales_Contact_1</span>
<span class="t" style="left:246.5px;top:495.8px;font-size:13px;line-height:13px;color:#ccc;letter-spacing:0.43px;">4.236800e+00</span>
<span class="t" style="left:109.0px;top:522.8px;font-size:13px;line-height:13px;color:#ccc;">5</span>
<span class="t" style="left:132.4px;top:522.8px;font-size:13px;line-height:13px;color:#ccc;letter-spacing:-0.03px;">Sales_Contact_2</span>
<span class="t" style="left:246.5px;top:522.8px;font-size:13px;line-height:13px;color:#ccc;letter-spacing:0.43px;">3.638200e+00</span>
<span class="t" style="left:109.0px;top:549.8px;font-size:13px;line-height:13px;color:#ccc;">6</span>
<span class="t" style="left:132.4px;top:549.8px;font-size:13px;line-height:13px;color:#ccc;letter-spacing:-0.03px;">Sales_Contact_3</span>
<span class="t" style="left:246.5px;top:549.8px;font-size:13px;line-height:13px;color:#ccc;letter-spacing:0.43px;">2.343200e+00</span>
<span class="t" style="left:109.0px;top:576.8px;font-size:13px;line-height:13px;color:#ccc;">7</span>
<span class="t" style="left:132.4px;top:576.8px;font-size:13px;line-height:13px;color:#ccc;letter-spacing:-0.03px;">Sales_Contact_4</span>
<span class="t" style="left:247.3px;top:576.8px;font-size:13px;line-height:13px;color:#ccc;letter-spacing:0.36px;">1.094780e+01</span>
<span class="t" style="left:59.3px;top:712.3px;font-size:12px;line-height:12px;color:#ccc;letter-spacing:-0.66px;">25</span>
<span class="t" style="left:93.5px;top:712.3px;font-size:12px;line-height:12px;color:#ccc;letter-spacing:-0.76px;">19</span>
<span class="t" style="left:139.0px;top:712.3px;font-size:12px;line-height:12px;color:#ccc;">0</span>
<span class="t" style="left:179.8px;top:712.3px;font-size:12px;line-height:12px;color:#ccc;letter-spacing:-0.05px;">Discovering Python Interpreters</span>
<span class="t" style="left:1231.5px;top:712.3px;font-size:12px;line-height:12px;color:#ccc;letter-spacing:-0.11px;">Cell 1 of 26</span>
<span class="t" style="left:88.7px;top:741.3px;font-size:15px;line-height:15px;color:#222;letter-spacing:-0.30px;">Type here to search</span>
<span class="t" style="left:1047.4px;top:741.8px;font-size:12px;line-height:12px;color:#fff;letter-spacing:-0.41px;">Desktop</span>
<span class="t" style="left:1097.5px;top:731.3px;font-size:12px;line-height:12px;color:#fff;transform:scaleX(1.35);transform-origin:0 0;">»</span>
<span class="t" style="left:1213.7px;top:742.5px;font-size:11px;line-height:11px;color:#fff;letter-spacing:-1.02px;">ENG</span>
<span class="t" style="left:1264.8px;top:733.7px;font-size:11.5px;line-height:11.5px;color:#fff;letter-spacing:-0.65px;">13:02</span>
<span class="t" style="left:1249.6px;top:751.8px;font-size:11.5px;line-height:11.5px;color:#fff;">30/01/2024</span>
<span class="t" style="left:1337.6px;top:749.7px;font-size:11px;line-height:11px;color:#fff;">3</span>
<span class="t" style="left:1073.0px;top:652.1px;font-size:20px;line-height:20px;color:#7f7f7f;letter-spacing:-0.09px;">Activate Windows</span>
<span class="t" style="left:1073.0px;top:677.3px;font-size:15px;line-height:15px;color:#7f7f7f;letter-spacing:-0.02px;">Go to Settings to activate Windows.</span>
<span class="t" style="left:600.8px;top:724.4px;font-size:27.5px;line-height:27.5px;color:#fff;letter-spacing:0.71px;-webkit-text-stroke:.9px #fff;opacity:.36;">mostaql.com</span>
<span class="t" style="left:600.5px;top:682.4px;font-size:45px;line-height:45px;color:#fff;font-weight:700;font-family:'DejaVu Sans', sans-serif;direction:rtl;opacity:.34;-webkit-text-stroke:1.2px #fff;transform:scaleY(1.26);transform-origin:0 87%;">مستقل</span>
</body>
</html>
